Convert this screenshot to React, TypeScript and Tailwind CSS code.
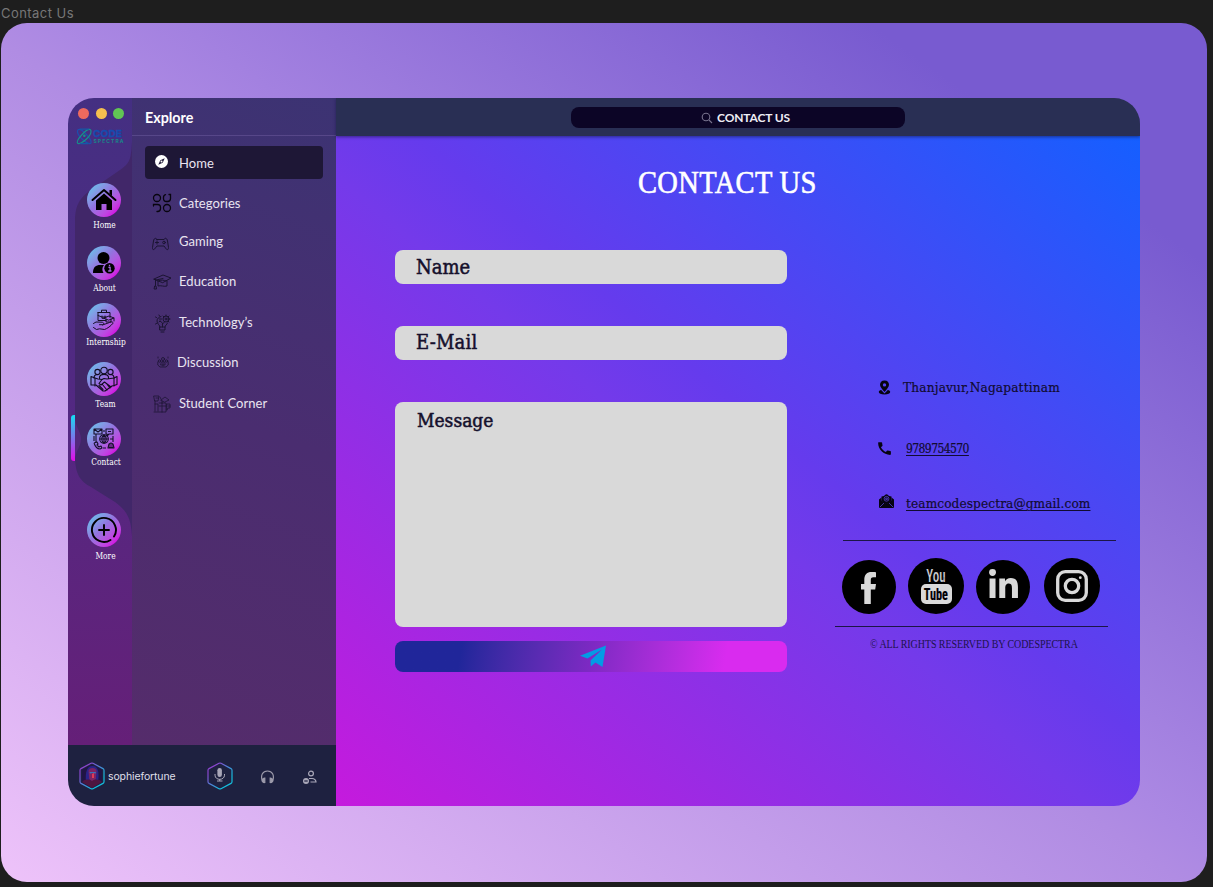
import React from "react";
import { FaLinkedinIn } from "react-icons/fa";
import { MdCall } from "react-icons/md";

const SERIF = "font-['DejaVu_Serif_Condensed','DejaVu_Serif',serif] [font-stretch:condensed]";

function CodeLogo() {
  return (
    <svg width="48" height="17" viewBox="0 0 48 17" fill="none">
      <g strokeWidth="1.200">
        <path d="M1.500 3.500C1.500 0 5 1 8.500 4.500S16 13 15 15 9 14 5.500 10.500 1.500 5.500 1.500 3.500Z" stroke="#1c4fae" />
        <path d="M15 3.500C15 0 11.500 1 8 4.500S.5 13 1.500 15 7.500 14 11 10.500 15 5.500 15 3.500Z" stroke="#168f8b" />
        <path d="M4 1.200h9M4.500 15.700h8" stroke="#1559a6" />
      </g>
      <circle cx="8.300" cy="7.800" r="1.300" fill="#168f8b" />
      <text x="17" y="9.200" fontSize="9.500" fontWeight="700" fill="#174bae" stroke="#174bae" strokeWidth=".3" textLength="29" lengthAdjust="spacingAndGlyphs" fontFamily="Inter, sans-serif">CODE</text>
      <text x="17.500" y="14.800" fontSize="5" fontWeight="700" fill="#178889" textLength="30" fontFamily="Inter, sans-serif">SPECTRA</text>
    </svg>
  );
}

function HomeGlyph() {
  return (
    <svg width="26" height="24" viewBox="0 0 26 24">
      <path d="M1.500 12 13 2l11.500 10" fill="none" stroke="#000" strokeWidth="2" strokeLinecap="round" strokeLinejoin="round" />
      <path d="M18.500 2H21v6l-2.500-2.200ZM13 5.500l8 7V22h-5.500v-6h-5v6H5v-9.500Z" />
    </svg>
  );
}

function AboutGlyph() {
  return (
    <svg width="24" height="24" viewBox="0 0 24 24">
      <circle cx="11.500" cy="7" r="6" />
      <path d="M1 22c0-6 3-8 7-8h4a7 7 0 0 0-.5 8Z" />
      <circle cx="17.500" cy="17.300" r="5.200" />
      <path d="M16.400 16.300h1.700v3.700M16.200 20h3.300M17.500 13.700v1.500" stroke="#a36add" strokeWidth="1.300" fill="none" />
    </svg>
  );
}

function InternshipGlyph() {
  return (
    <svg width="24" height="24" viewBox="0 0 24 24" fill="none" stroke="#151026" strokeWidth="1" strokeLinejoin="round" strokeLinecap="round">
      <path d="M6 4.500h12v5M6 4.500v8h8M9.500 4.500V2.200h5v2.300M6 7.500l4 1.500h4M10 8v2.300h3V8" />
      <path d="m12 10 5-2 5 2-5 2ZM14 11v3h5v-3M22 10v3" />
      <path d="M1.500 15.500 4 14l6 .2c2 .3 2.500 2 .5 2.500H7.500M10.500 17l7-2.500c2-1 4-.5 3.500.7-2 2.800-6 5.500-8.500 6.300l-5-.7-3 .7-3-2" />
    </svg>
  );
}

function TeamGlyph() {
  return (
    <svg width="28" height="26" viewBox="0 0 28 26" fill="none" stroke="#100c20" strokeWidth="1.100" strokeLinejoin="round" strokeLinecap="round">
      <circle cx="14" cy="4.500" r="3.200" />
      <circle cx="7.500" cy="6" r="2.600" />
      <circle cx="20.500" cy="6" r="2.600" />
      <path d="M9.500 12.500V11c1-3.500 8-3.500 9 0v1.500M4 12c0-2 1-3.500 3.500-3.500M24 12c0-2-1-3.500-3.500-3.500" />
      <path d="M1 10.500 5 12l3 1 4 .5 2-1 3 .5 7-1 3-1.500v8l-3 1-2 .5-7 5h-2l-7-6H1Z" />
      <path d="m12 13.500-3 4 2 1.500 3.500-3 6.500 5M9 19.500l4 4M12 18l5 6M16 17l4 5M5 12v8M24 12v8" />
    </svg>
  );
}

function ContactGlyph() {
  return (
    <svg width="22" height="22" viewBox="0 0 22 22" fill="none" stroke="#15102a" strokeWidth="1.100" strokeLinejoin="round">
      <path d="M1 1h8v5H1ZM1 1l4 3 4-3M13 1h7v5h-4l-2 2V6h-1ZM15 3.500h3" />
      <circle cx="11" cy="11" r="4.300" />
      <path d="M6.700 11h8.600M11 6.700v8.600M11 6.700c-3 3-3 6 0 8.600M11 6.700c3 3 3 6 0 8.600" />
      <path d="M1 8v5M3 6v8M1 15l3-1 1 2-1 1 2 2 2-1 1 2-2 1c-3 0-5-3-6-6M13 20h-3M15 20l1-4 2-1 2 1 1 4ZM16 17h4M16 19h4M20 8v6M17 11h3M11 2v2" />
    </svg>
  );
}

function MoreGlyph() {
  return (
    <svg width="28" height="28" viewBox="0 0 28 28" fill="none" stroke="#000" strokeWidth="1.900" strokeLinecap="round">
      <path d="M20.500 24A12 12 0 1 1 24 20.500" />
      <path d="M14 9v10M9 14h10" />
    </svg>
  );
}

type RailItem = { label: string; glyph: React.ReactNode; box: string; gap: string; shift: string };

const railItems: RailItem[] = [
  { label: "Home", glyph: <HomeGlyph />, box: "h-[63px]", gap: "mt-[2px]", shift: "pl-px" },
  { label: "About", glyph: <AboutGlyph />, box: "h-[57px]", gap: "mt-[2px]", shift: "pl-px" },
  { label: "Internship", glyph: <InternshipGlyph />, box: "h-[59px]", gap: "mt-[-1px]", shift: "pl-[4px]" },
  { label: "Team", glyph: <TeamGlyph />, box: "h-[60px]", gap: "mt-[2px]", shift: "pl-[3px]" },
  { label: "Contact", glyph: <ContactGlyph />, box: "h-[91px]", gap: "mt-0", shift: "pl-[4px]" },
  { label: "More", glyph: <MoreGlyph />, box: "h-[60px]", gap: "mt-[3px]", shift: "pl-[3px]" },
];

function Rail() {
  return (
    <nav className="relative w-[64px] bg-linear-to-b from-[#442f82] via-[#532882] to-[#651f78]">
      <svg className="absolute left-0 top-0" width="64" height="440" viewBox="0 0 64 440">
        <path d="M64 43C63 62 62 65 52 72L23 92C10 101 7 109 7 125V357C7 376 12 383 23 389L47 404C59 413 63 420 64 438Z" fill="#412769" />
        <path d="M7 319c0 10 6 14 6 22s-6 12-6 22Z" fill="#53287d" />
        <path d="M7 317v46H6a3 3 0 0 1-3-3v-40a3 3 0 0 1 3-3Z" fill="url(#activeBar)" />
        <defs>
          <linearGradient id="activeBar" x1="0" y1="0" x2="0" y2="1">
            <stop stopColor="#12dff2" />
            <stop offset="1" stopColor="#e50be7" />
          </linearGradient>
        </defs>
      </svg>
      <div className="relative flex flex-col">
        <div className="flex h-[31px] items-center gap-[7px] pl-[10px]">
          <i className="size-[11px] rounded-full bg-[#ed6a5e]" />
          <i className="size-[11px] rounded-full bg-[#f5bf4f]" />
          <i className="ml-[-1px] size-[11px] rounded-full bg-[#61c554]" />
        </div>
        <div className="h-[53.5px] pl-[8px] pt-px"><div className="mt-[-2px]"><CodeLogo /></div></div>
        {railItems.map((item) => (
          <div key={item.label} className={`flex flex-col items-center pl-[8px] ${item.box}`}>
            <div className="flex size-[34px] shrink-0 items-center justify-center rounded-full bg-linear-135 from-[#66bde9] from-10% via-[#9273df] via-45% to-[#d012e2] to-85%">
              {item.glyph}
            </div>
            <span className={`whitespace-nowrap text-[8.3px] leading-[12px] text-white ${SERIF} ${item.gap} ${item.shift}`}>{item.label}</span>
          </div>
        ))}
      </div>
    </nav>
  );
}

const thin = { fill: "none", stroke: "#1b1432", strokeWidth: 1, strokeLinejoin: "round" as const, strokeLinecap: "round" as const };

function CategoriesGlyph() {
  return (
    <svg width="20" height="20" viewBox="0 0 20 20" fill="none" stroke="#08050f" strokeWidth="1.300" strokeLinecap="round">
      <circle cx="5" cy="5" r="3.500" />
      <path d="M13.500 1.600Q11.500 2 11.500 4.500v1q0 3 3 3h1q3 0 3-3V1.500H17" />
      <path d="M1.500 13v-1.500h4q3 0 3 3v1q0 3-3 3H5" />
      <circle cx="15" cy="15" r="3.500" />
    </svg>
  );
}

function GamingGlyph() {
  return (
    <svg width="17" height="14" viewBox="0 0 17 14" {...thin}>
      <path d="M5 2.500h7C13 .5 15 1 15.500 4l1 6.500c0 3-2 2.500-3 .5L12 9H5l-2 2.500c-1 1.500-3 1.500-2.500-1L1.500 4C2 1 4 .5 5 2.500Z" />
      <path d="M3.500 5.500h3M5 4v3" />
      <circle cx="12" cy="5.500" r="1.300" />
    </svg>
  );
}

function EducationGlyph() {
  return (
    <svg width="19" height="16" viewBox="0 0 19 16" {...thin}>
      <path d="M1 5 10 1l8 3-8 4.500ZM5 7.500V12c3-1 6 1 9 0V7M2.500 5.500v6M2 12h1l.5 3H1.500ZM5 7c3-1.500 6-1 8 0M10 4.500 3 6" />
    </svg>
  );
}

function TechnologyGlyph() {
  return (
    <svg width="16" height="19" viewBox="0 0 16 19" {...thin}>
      <path d="M5 13c0-2-3-3-3-6 0-2.500 2-4 4-4.500M10 13c0-2 2-2 2.500-4M5 13h5v3H5ZM6 18h3M7.500 13V9L5 7M7.500 10l2-2" />
      <circle cx="11" cy="5" r="3" />
      <circle cx="11" cy="5" r="1" />
      <path d="M11 1v1M15 5h-1M8 2l1 1M14 2l-1 1M14 8l-1-1M.5 3l1 .5M.5 10l1-.5M4 1l.5 1M4.500 5h2M4 8l1-1" />
    </svg>
  );
}

function DiscussionGlyph() {
  return (
    <svg width="12" height="12" viewBox="0 0 12 12" {...thin} strokeOpacity=".8">
      <circle cx="6" cy="3" r="1.500" />
      <circle cx="2.500" cy="5" r="1.200" />
      <circle cx="9.500" cy="5" r="1.200" />
      <path d="M4 7c0-2 4-2 4 0v2H4ZM.8 6v3L3 11h6l2.200-2V6M6 5v5M1 1v1M11 1v1" />
    </svg>
  );
}

function StudentGlyph() {
  return (
    <svg width="18" height="18" viewBox="0 0 18 18" {...thin} strokeOpacity=".75">
      <path d="M1 1h5l-1 5H2ZM3 3h2M2 6v10M2 9h3v7M6 8h7v9H1M8 5l4-3 4 3-4 2ZM9 6v2M6 11h7M9 8v9M14 9h3v4h-2l-1 2ZM15 11h2M8 4 7 2" />
    </svg>
  );
}

const menu = [
  { label: "Categories", glyph: <CategoriesGlyph />, row: "h-[39px]", cell: "w-[34px] pl-[7px]", nudge: "mt-[-1px]" },
  { label: "Gaming", glyph: <GamingGlyph />, row: "h-[38px]", cell: "w-[34px] pl-[7px]", nudge: "mt-[3px]" },
  { label: "Education", glyph: <EducationGlyph />, row: "h-[42px]", cell: "w-[34px] pl-[8px]", nudge: "mt-[-1px]" },
  { label: "Technology’s", glyph: <TechnologyGlyph />, row: "h-[40px]", cell: "w-[34px] pl-[10px]", nudge: "" },
  { label: "Discussion", glyph: <DiscussionGlyph />, row: "h-[39px]", cell: "w-[32px] pl-[12px]", nudge: "mt-[-2px]" },
  { label: "Student Corner", glyph: <StudentGlyph />, row: "h-[44px]", cell: "w-[34px] pl-[8px]", nudge: "" },
];

function ExplorePanel() {
  return (
    <section className="w-[204px] bg-linear-200 from-[#3c3373] via-[#4a2d70] to-[#552c6b] font-[Lato,sans-serif] text-[#e9e4f0]">
      <h2 className="h-[38px] border-b border-[#574789] pl-[13px] text-[14.3px] font-bold leading-[40px] text-white">Explore</h2>
      <div className="flex flex-col pl-[13px] pt-[10px] text-[13px] tracking-[0.06px]">
        <div className="flex h-[33px] w-[178px] items-center rounded-[4px] bg-[#1e1736]">
          <svg className="ml-[10px] mt-[-2px]" width="13" height="13" viewBox="0 0 13 13">
            <circle cx="6.500" cy="6.500" r="6.500" fill="#fff" />
            <path d="m9.700 3.300-2 4.400-4.400 2 2-4.400Z" fill="#1e1736" />
            <circle cx="6.500" cy="6.500" r="1" fill="#fff" />
          </svg>
          <span className="ml-[11px] pt-[2px]">Home</span>
        </div>
        <div className="mt-[5px] flex flex-col">
          {menu.map((m) => (
            <div key={m.label} className={`flex items-center ${m.row}`}>
              <span className={`shrink-0 ${m.cell} ${m.nudge}`}>{m.glyph}</span>
              <span className="whitespace-nowrap">{m.label}</span>
            </div>
          ))}
        </div>
      </div>
    </section>
  );
}

function Hexagon({ children }: { children: React.ReactNode }) {
  return (
    <svg width="26" height="28" viewBox="0 0 26 28" fill="none">
      <defs>
        <linearGradient id="hexEdge" x1="0" y1="0" x2="1" y2="1">
          <stop offset=".2" stopColor="#8b45cf" />
          <stop offset=".75" stopColor="#15bcdc" />
        </linearGradient>
      </defs>
      {children}
      <path d="M12 1.300q1-.5 2 0l10 5.300q1 .6 1 1.700v11.400q0 1.100-1 1.700l-10 5.300q-1 .5-2 0l-10-5.300q-1-.6-1-1.700V8.300q0-1.100 1-1.700Z" stroke="url(#hexEdge)" strokeWidth="1.200" />
    </svg>
  );
}

function UserBar() {
  return (
    <footer className="flex h-[61px] items-center bg-[#1e2140]">
      <div className="ml-[11px]">
        <Hexagon>
          <path d="M13 3 23 8v12l-10 6-10-6V8Z" fill="#201445" />
          <path d="M7 20c-1-10 1-16 6.500-16s7 6 5.500 16Z" fill="#2a2388" />
          <path d="M9.500 9c0-4 8-4 8 0l-.7 8-3 3-3.500-3Z" fill="#7c2465" />
          <path d="M10.500 10h6.500l-.5 1.500-3-.5-2.500.5Z" fill="#3973bd" />
          <path d="m13 12 2-1v5h-2Z" fill="#df3b56" />
          <path d="M3 20c3-3 6-3 10-1 3-2 7-2 10 1l-10 6Z" fill="#4e1640" />
        </Hexagon>
      </div>
      <span className="ml-[3px] w-[99px] pt-[3px] font-[Inter,sans-serif] text-[10.5px] tracking-[-0.12px] text-[#dedfe8]">sophiefortune</span>
      <Hexagon>
        <rect x="10.400" y="6" width="4.500" height="9" rx="2.200" fill="#a9a7b8" />
        <path d="M8 12v1.200c0 5.500 9.500 5.500 9.500 0V12M12.700 17v2M10 19h5.500" stroke="#a9a7b8" />
      </Hexagon>
      <svg className="ml-[27px] mt-[3px]" width="15" height="14" viewBox="0 0 15 14" fill="none" stroke="#9c9aaa" strokeWidth="1.200">
        <path d="M2.500 11.500C0 5 3 1 7.500 1S15 5 12.500 11.500" />
        <path d="M4.800 8v4.500c-1.500.3-2.500-.7-2.500-2S3.500 8 4.800 8ZM10.200 8v4.500c1.500.3 2.500-.7 2.500-2S11.500 8 10.200 8Z" fill="#9c9aaa" />
      </svg>
      <svg className="ml-[27px] mt-[3px]" width="16" height="15" viewBox="0 0 16 15" fill="none" stroke="#aaa8b9" strokeWidth="1.200">
        <circle cx="9" cy="3.500" r="2.400" />
        <path d="M7 8.500h3c2.500 0 4 2 4 3.500H8.500" />
        <circle cx="4" cy="11" r="3" fill="#aaa8b9" stroke="none" />
        <path d="M2.300 11h3.400" stroke="#1e2140" />
      </svg>
    </footer>
  );
}

function PinGlyph() {
  return (
    <svg width="13" height="15" viewBox="0 0 13 15" fill="#060411">
      <path fillRule="evenodd" d="M6.500.5c-3 0-4.500 2-4.500 4.300 0 2 2.500 5 4.500 7.200 2-2.200 4.500-5.200 4.500-7.200C11 2.500 9.500.5 6.500.5Zm0 2.700a1.700 1.700 0 1 1 0 3.400 1.700 1.700 0 0 1 0-3.400Z" />
      <path d="M3.200 10C-1 11 .5 14.500 6.500 14.500s7.500-3.500 3.300-4.500l-3.300 3.500Z" />
    </svg>
  );
}

function MailGlyph() {
  return (
    <svg width="15" height="14" viewBox="0 0 15 14">
      <path d="M0 5.500 2.500 3.500v3L7.500 10l5-3.500v-3L15 5.500V13q0 1-1 1H1q-1 0-1-1Z" fill="#060411" />
      <path d="M2.500 2.500 5 2q2.500-3.500 5 0l2.500.5V7l-5 3.500-5-3.500Z" fill="#060411" />
      <circle cx="7.500" cy="4.800" r="2.400" fill="none" stroke="#6049df" strokeWidth=".7" />
      <path d="M6.800 4h1.500v1.600H6.800ZM1 13l4-4M14 13l-4-4" fill="none" stroke="#6049df" strokeWidth=".7" />
    </svg>
  );
}

function SocialLinks() {
  return (
    <div className="flex h-[56px] items-center pl-[7px] text-[#d9d9d9]">
      <a className="mt-px flex size-[54px] items-center justify-center rounded-full bg-black">
        <svg width="16" height="32" viewBox="0 0 16 32" fill="#d9d9d9" className="mt-[2px]">
          <path d="M3.300 32V17.500H0V12h3.300V8C3.300 2.500 6 0 10.500 0 12.700 0 15 .2 15 .2v5h-2.500C10.200 5.200 9.800 6.500 9.800 8v4H15l-.8 5.500H9.800V32Z" />
        </svg>
      </a>
      <a className="ml-[12px] flex size-[56px] flex-col items-center justify-center rounded-full bg-black font-[Roboto,sans-serif]">
        <span className="flex h-[15px] w-[28px] scale-x-[0.72] items-center justify-center text-[18px] font-medium leading-[20px]">You</span>
        <span className="flex h-[20px] w-[31px] items-center justify-center rounded-[5px] bg-[#d9d9d9] text-[17px] font-bold leading-[20px] text-black">
          <span className="scale-x-[0.72]">Tube</span>
        </span>
      </a>
      <a className="ml-[12px] mt-px flex size-[54px] items-center justify-center rounded-full bg-black">
        <FaLinkedinIn size={33} className="mt-[-3px]" />
      </a>
      <a className="ml-[14px] flex size-[56px] items-center justify-center rounded-full bg-black">
        <svg width="32" height="32" viewBox="0 0 32 32" fill="none" stroke="#d9d9d9" strokeWidth="3.300">
          <rect x="1.700" y="1.700" width="28.600" height="28.600" rx="7.500" />
          <circle cx="16" cy="16" r="6.700" />
          <circle cx="24.300" cy="7.700" r="1.400" fill="#d9d9d9" stroke="none" />
        </svg>
      </a>
    </div>
  );
}

function ContactForm() {
  const field = `block rounded-[8px] bg-[#d9d9d9] px-[21px] text-[#15102c] [-webkit-text-stroke:0.5px_#15102c] ${SERIF}`;
  return (
    <form className="flex w-[392px] flex-col">
      <label className={`h-[34px] text-[20px] leading-[34px] ${field}`}>Name</label>
      <label className={`mt-[42px] h-[34px] text-[20px] leading-[33px] tracking-[0.2px] ${field}`}>E-Mail</label>
      <label className={`mt-[42px] h-[225px] text-[19px] leading-[36px] ${field}`}><span className="pl-px">Message</span></label>
      <button type="button" className="mt-[14px] flex h-[31px] items-center justify-center rounded-[8px] bg-linear-100 from-[#20269a] from-17% via-[#7d29c3] via-50% to-[#d92bef] to-84%">
        <svg className="ml-[4px]" width="27" height="23" viewBox="0 0 27 23" fill="#039be5">
          <path d="M0 10.800 26 .5 22.500 22l-7-4.500-4.700 4-.3-6L22 4.500 7.500 13.500Z" />
        </svg>
      </button>
    </form>
  );
}

function ContactDetails() {
  return (
    <aside className={`ml-[48px] flex w-[281px] flex-col pt-[127px] text-[#110b31] [-webkit-text-stroke:0.2px_#110b31] ${SERIF}`}>
      <div className="flex h-[20px] items-center pl-[43px] text-[13.5px]">
        <PinGlyph />
        <span className="ml-[12px] whitespace-nowrap pt-px tracking-[0.18px]">Thanjavur,Nagapattinam</span>
      </div>
      <div className="mt-[41px] flex h-[20px] items-center pl-[41px] text-[12px]">
        <MdCall size={17} className="text-[#060411]" />
        <span className="ml-[13px] pt-px tracking-[-0.58px] underline decoration-1 underline-offset-2">9789754570</span>
      </div>
      <div className="mt-[35px] flex h-[20px] items-center pl-[44px] text-[13.5px]">
        <span className="mt-[-4px]"><MailGlyph /></span>
        <span className="ml-[12px] whitespace-nowrap pt-px tracking-[0.11px] underline decoration-1 underline-offset-2">teamcodespectra@gmail.com</span>
      </div>
      <hr className="ml-[8px] mt-[27px] w-[273px] border-[#1c1547]" />
      <div className="mt-[17px]"><SocialLinks /></div>
      <hr className="mt-[12px] w-[273px] border-[#1c1547]" />
      <p className="ml-[35px] mt-[9px] origin-left scale-x-[0.87] whitespace-nowrap font-['Liberation_Serif',serif] text-[11.5px] leading-[16px] tracking-[-0.08px] text-[#1d124c] [-webkit-text-stroke:0]">© ALL RIGHTS RESERVED BY CODESPECTRA</p>
    </aside>
  );
}

export default function App() {
  return (
    <div className="h-[887px] w-[1213px] overflow-hidden bg-[#1e1e1e]">
      <div className="h-[23px] pl-px font-[Inter,sans-serif] text-[13px] leading-[26px] tracking-[0.45px] text-[#777]">Contact Us</div>
      <div className="ml-px h-[859px] w-[1206px] rounded-[26px] bg-[linear-gradient(to_bottom_left,#785bd0_14%,#ab88e3_48%,#b08ce3_51%,#efc4fa_101%)] pl-[67px] pt-[75px]">
        <div className="flex h-[708px] w-[1072px] overflow-hidden rounded-[26px]">
          <div className="flex w-[268px] shrink-0 flex-col">
            <div className="flex flex-1">
              <Rail />
              <ExplorePanel />
            </div>
            <UserBar />
          </div>
          <div className="flex w-[804px] flex-col">
            <header className="relative flex h-[38px] items-center bg-[#292f54] pl-[235px] shadow-[0_1px_3px_rgba(20,20,70,0.6)]">
              <div className="flex h-[21px] w-[334px] items-center justify-center rounded-[8px] bg-[#0c0526] pl-[15px] font-[Lato,sans-serif] text-[12px] font-bold text-[#efedf5]">
                <svg className="mr-[4px] mt-[2px]" width="12" height="12" viewBox="0 0 12 12" fill="none" stroke="#77728d" strokeWidth="1.100">
                  <circle cx="5" cy="5" r="3.800" />
                  <path d="m8 8 3 3" />
                </svg>
                <span className="pt-[2px] tracking-[-0.15px]">CONTACT US</span>
              </div>
            </header>
            <main className="flex flex-1 flex-col bg-[linear-gradient(to_top_right,#c51add_0%,#743aea_47%,#653bed_55%,#155fff_100%)]">
              <h1 className="h-[114px] pl-[302px] pt-[27px] font-['Liberation_Serif',serif] text-[30px] leading-[40px] tracking-[-0.4px] text-white [-webkit-text-stroke:0.6px_#fff]">
                <span className="inline-block origin-left scale-x-[0.92] text-[31px] tracking-[0.35px]">CONTACT US</span>
              </h1>
              <div className="flex pl-[59px]">
                <ContactForm />
                <ContactDetails />
              </div>
            </main>
          </div>
        </div>
      </div>
    </div>
  );
}
